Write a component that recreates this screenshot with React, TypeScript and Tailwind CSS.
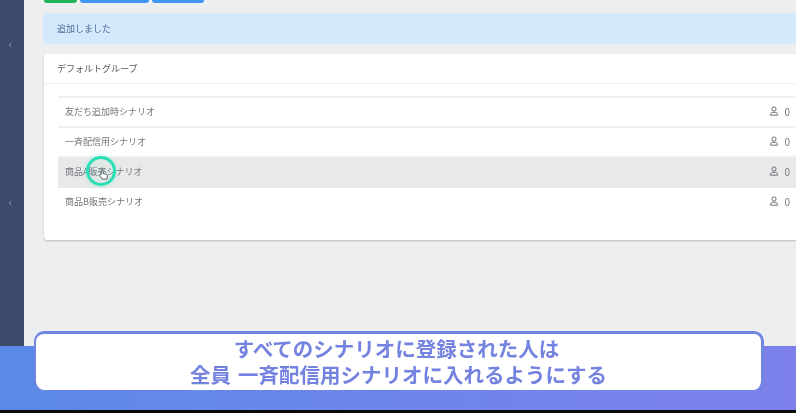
import { ChevronLeft } from "lucide-react";

const SCENARIOS = ["友だち追加時シナリオ", "一斉配信用シナリオ", "商品A販売シナリオ", "商品B販売シナリオ"];

function UserIcon() {
  return (
    <svg viewBox="0 0 12 12" className="h-[10px] w-[10px] shrink-0" fill="none" stroke="#6b6f76" strokeWidth="1.2">
      <circle cx="6" cy="3.6" r="2.5" />
      <path d="M1.6 11v-.7c0-1.6 1.4-2.7 2.8-2.7h3.2c1.4 0 2.8 1.1 2.8 2.7v.7z" />
    </svg>
  );
}

export default function App() {
  return (
    <div className="relative flex h-[413px] w-[796px] flex-col overflow-hidden bg-[#eceef0] font-['Noto_Sans_CJK_JP','Noto_Sans',sans-serif]">
      <div className="flex h-[346px] shrink-0">
        {/* サイドバー */}
        <aside className="flex w-6 shrink-0 flex-col items-start bg-[#3a4a68] pl-[6px] pt-[41px] text-[#7f9cc4]">
          <ChevronLeft size={8} strokeWidth={3} />
          <ChevronLeft size={8} strokeWidth={3} className="mt-[150px]" />
        </aside>

        <main className="min-w-0 flex-1 pl-5 blur-[0.5px]">
          <div className="flex h-[3px] gap-[3px]">
            <span className="w-[33px] rounded-b-sm bg-[#22b356]" />
            <span className="w-[69px] rounded-b-sm bg-[#3f96f4]" />
            <span className="w-[52px] rounded-b-sm bg-[#3f96f4]" />
          </div>

          <div className="-ml-px mt-[10px] flex h-[31px] items-center rounded-l-[3px] bg-[#d5e9fd] pl-[14px] text-[9px] text-[#4d6a94]">
            追加しました
          </div>

          <section className="mt-[10px] h-[186px] rounded-l-[3px] bg-white shadow-[0_1px_2px_rgba(0,0,0,0.22)]">
            <h2 className="flex h-[30px] items-center border-b border-[#f2f2f3] pl-[13px] text-[9px] font-normal text-[#55585e]">
              デフォルトグループ
            </h2>
            <ul className="ml-[14px] mt-[12px] border-t-2 border-[#f0f0f1]">
              {SCENARIOS.map((name, i) => (
                <li
                  key={name}
                  className={`flex h-[30px] items-center justify-between border-b-2 pl-[7px] pr-[6px] text-[9px] text-[#74777d] ${
                    i === 2 ? "border-transparent bg-[#e9e9ea]" : i === 3 ? "border-transparent" : "border-[#f0f0f1]"
                  }`}
                >
                  <span>{name}</span>
                  <span className="flex items-center gap-[5px] pb-[2px] text-[10px] text-[#74777d]">
                    <UserIcon />
                    0
                  </span>
                </li>
              ))}
            </ul>
          </section>
        </main>
      </div>

      <div className="h-16 shrink-0 bg-gradient-to-r from-[#5b8ae9] to-[#7d80ea]" />
      <div className="flex-1 bg-[#0a0a0a]" />

      {/* クリック位置のハイライト */}
      <div className="absolute left-[86px] top-[156px] flex h-[30px] w-[30px] items-center justify-center rounded-full border-[3px] border-[#2adfb5] bg-[#25dcb0]/5 shadow-[0_0_4px_rgba(37,220,176,0.4)] blur-[0.3px]">
        <svg viewBox="0 0 12 12" className="ml-[5px] mt-[6px] h-[11px] w-[11px]" fill="#fff" stroke="#50535a" strokeWidth="1">
          <path d="M3.5 6V1.8a1 1 0 0 1 2 0V5l3.6.8c.8.2 1.2.7 1.1 1.5L9.8 11H4.5L2 7.5c-.5-.8.6-1.8 1.5-1.5z" />
        </svg>
      </div>

      {/* 字幕 */}
      <div className="absolute left-[34px] top-[331px] flex h-[60px] w-[730px] flex-col items-center justify-center rounded-[10px] border-t-[3px] border-r-[3px] border-l-[2px] border-b border-[#6f86e3] bg-white pt-[2px] font-['Liberation_Sans','Noto_Sans_CJK_JP',sans-serif] text-[20.5px] leading-[26px] font-bold text-[#7583e0] blur-[0.4px]">
        <p className="pr-[4px]">すべてのシナリオに登録された人は</p>
        <p>
          全員<span className="ml-[7px]">一斉配信用シナリオに入れるようにする</span>
        </p>
      </div>
    </div>
  );
}
